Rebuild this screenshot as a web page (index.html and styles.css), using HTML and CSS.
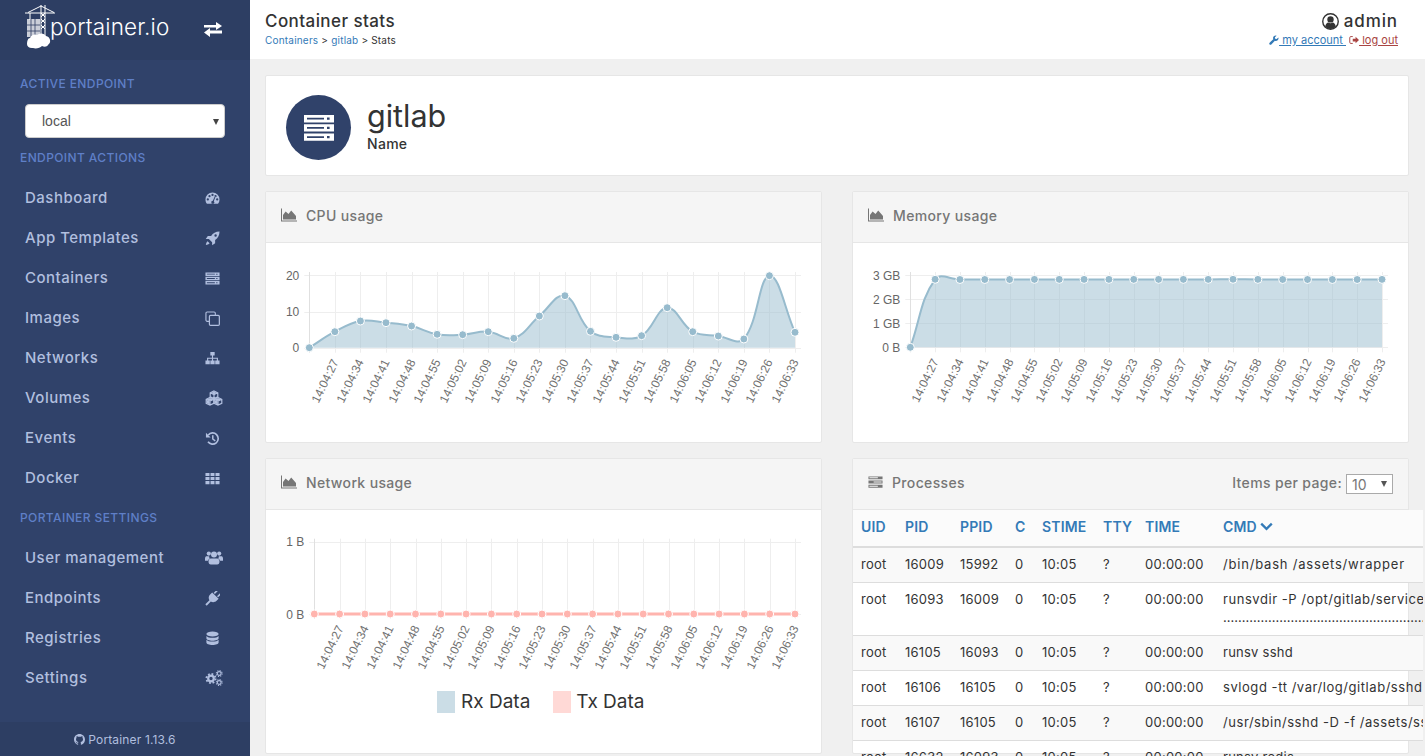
FILE: index.html
```html
<!DOCTYPE html>
<html lang="en">
<head>
    <meta charset="UTF-8">
    <title>Portainer - Container stats</title>
    <link rel="stylesheet" href="styles.css">
</head>
<body>
    <svg class="icon-defs" aria-hidden="true">
        <symbol id="i-exchange" viewBox="0 0 18 16"><path d="M0 4h12V1l6 4-6 4V6.500H0zM18 9.500H6V7L0 11.500 6 16v-3.500h12z" fill-rule="evenodd"/></symbol>
        <symbol id="i-dashboard" viewBox="0 0 16 16"><path fill-rule="evenodd" d="M8 1.500A7.500 7.500 0 0 0 .5 9c0 1.800.6 3.400 1.600 4.700h11.800A7.500 7.500 0 0 0 15.500 9 7.500 7.500 0 0 0 8 1.500zM3 7.800a1.200 1.200 0 1 1 0 2.400 1.200 1.200 0 0 1 0-2.400zM4.800 4.300a1.200 1.200 0 1 1 0 2.400 1.200 1.200 0 0 1 0-2.400zM8 3a1.200 1.200 0 1 1 0 2.400A1.200 1.200 0 0 1 8 3zm3.200 1.300a1.200 1.200 0 1 1 0 2.400 1.200 1.200 0 0 1 0-2.400zM13 7.800a1.200 1.200 0 1 1 0 2.400 1.200 1.200 0 0 1 0-2.400zM10.300 5.800l.9.400-1.800 4.600a1.600 1.600 0 1 1-1-.4z"/></symbol>
        <symbol id="i-rocket" viewBox="0 0 16 16"><path fill-rule="evenodd" d="M15.500.5c-4.200.1-7 1.600-9 4.700H3L.8 8.500h3.300l3.500 3.500v3.300l3.200-2.200v-3.500c3-2 4.600-4.800 4.700-9.100zM11.300 3.400a1.300 1.300 0 1 1 0 2.600 1.300 1.300 0 0 1 0-2.600z"/><path d="M2.700 10.800c-1.100.9-1.700 2.700-1.800 4 1.300-.1 3.100-.7 4-1.800z"/></symbol>
        <symbol id="i-server" viewBox="0 0 16 16"><path fill-rule="evenodd" d="M.5 1.500h15v3.700H.5zM2 2.900v.9h8.500v-.9zM12 2.800v1.100h1.300V2.800zM.5 6.100h15v3.700H.5zM2 7.500v.9h8.500v-.9zM12 7.400v1.100h1.300V7.400zM.5 10.700h15v3.700H.5zM2 12.100v.9h8.500v-.9zM12 12v1.100h1.300V12z"/></symbol>
        <symbol id="i-clone" viewBox="0 0 16 16"><path d="M4.500 11H2.300C1.600 11 1 10.400 1 9.700V2.300C1 1.600 1.600 1 2.300 1h7.400c.7 0 1.300.6 1.300 1.300v2.200" fill="none" stroke="currentColor" stroke-width="1.200"/><rect x="4.700" y="4.700" width="10.600" height="10.600" rx="1.200" fill="none" stroke="currentColor" stroke-width="1.300"/></symbol>
        <symbol id="i-sitemap" viewBox="0 0 16 16"><path d="M5.700 1h4.600v3.800H8.600v2.300h5.200v3h1.700V14h-4.600v-3.900h1.700V8.200H8.600v1.900h1.700V14H5.700v-3.900h1.700V8.200H3.400v1.900h1.700V14H.5v-3.900h1.700v-3h5.200V4.800H5.700z"/></symbol>
        <symbol id="i-cubes" viewBox="0 0 18 16"><g fill="none" stroke="currentColor" stroke-width="1.200"><path d="M9 1l3.800 1.800v4L9 8.600 5.200 6.800v-4zM5.200 2.800L9 4.600l3.800-1.800M9 4.600v4"/><path d="M5 7.500l3.800 1.800v4L5 15.100l-3.800-1.800v-4zM1.200 9.300L5 11.100l3.800-1.800M5 11.100v4"/><path d="M13 7.500l3.800 1.800v4L13 15.100l-3.800-1.800v-4zM9.200 9.300l3.800 1.800 3.800-1.800M13 11.100v4"/></g><path d="M9 1.500l3 1.400-3 1.300-3-1.300zM5 8l3 1.400-3 1.300-3-1.300zM13 8l3 1.400-3 1.300-3-1.300zM1.700 9.900l3 1.500v3l-3-1.500zM9.700 9.900l3 1.500v3l-3-1.500z"/></symbol>
        <symbol id="i-history" viewBox="0 0 16 16"><path d="M3.500 4.200a6 6 0 1 1-.3 7.300" fill="none" stroke="currentColor" stroke-width="1.800"/><path d="M1 1.800v5h5z"/><path d="M7.500 4.500h1.600v3.700l2.300 1.700-.9 1.200-3-2.200z"/></symbol>
        <symbol id="i-th" viewBox="0 0 16 16"><path d="M.5 2h4.300v3.300H.5zM5.900 2h4.200v3.300H5.900zM11.200 2h4.300v3.300h-4.300zM.5 6.400h4.300v3.200H.5zM5.900 6.400h4.200v3.200H5.900zM11.200 6.400h4.300v3.200h-4.300zM.5 10.700h4.300V14H.5zM5.900 10.700h4.200V14H5.900zM11.200 10.700h4.300V14h-4.300z"/></symbol>
        <symbol id="i-users" viewBox="0 0 18 16"><circle cx="3.800" cy="3.600" r="2.100"/><circle cx="14.200" cy="3.600" r="2.100"/><circle cx="9" cy="4.500" r="3"/><path d="M1 6.200h3.200c-.2.600.1 1.500.7 2.200-1 .4-1.700 1.200-1.900 2.300H0V8.400c0-1 .3-1.700 1-2.200zM17 6.200h-3.200c.2.600-.1 1.500-.7 2.200 1 .4 1.700 1.200 1.900 2.300H18V8.400c0-1-.3-1.700-1-2.200zM5.800 8.500h6.400c1.500 0 2.300 1.300 2.300 3.300 0 1.500-.8 2.700-2.300 2.700H5.800c-1.500 0-2.300-1.200-2.300-2.700 0-2 .8-3.300 2.300-3.300z"/></symbol>
        <symbol id="i-plug" viewBox="0 0 16 16"><g transform="rotate(45 8 8) translate(8 8) scale(1.150) translate(-8 -8)"><path d="M5.100-.5h1.500v4H5.100zM9.400-.5h1.500v4H9.400zM3.800 4.200h8.400v2.700c0 2.200-1.500 3.900-3.300 4.200v5.400H7.100v-5.400c-1.800-.3-3.300-2-3.300-4.200z"/></g></symbol>
        <symbol id="i-database" viewBox="0 0 16 16"><ellipse cx="8" cy="3.200" rx="6.500" ry="2.700"/><path d="M1.500 5.200c1 1.400 3.600 2 6.500 2s5.500-.6 6.500-2v2.600c0 1.500-2.900 2.700-6.500 2.700s-6.500-1.200-6.500-2.700zM1.500 9.300c1 1.400 3.600 2 6.500 2s5.500-.6 6.500-2v3c0 1.500-2.900 2.700-6.500 2.700s-6.500-1.200-6.500-2.700z"/></symbol>
        <symbol id="i-cogs" viewBox="0 0 18 16"><g fill="none" stroke="currentColor"><circle cx="6" cy="8.500" r="2.800" stroke-width="2.200"/><circle cx="6" cy="8.500" r="4.600" stroke-width="1.800" stroke-dasharray="1.800 1.810"/><circle cx="14.200" cy="3.500" r="1.900" stroke-width="1.100"/><circle cx="14.200" cy="3.500" r="2.900" stroke-width="1.100" stroke-dasharray="1.140 1.140"/><circle cx="14.200" cy="12.500" r="1.900" stroke-width="1.100"/><circle cx="14.200" cy="12.500" r="2.900" stroke-width="1.100" stroke-dasharray="1.140 1.140"/></g></symbol>
        <symbol id="i-github" viewBox="0 0 16 16"><path d="M8 0C3.580 0 0 3.580 0 8c0 3.540 2.290 6.530 5.470 7.590.4.070.55-.170.55-.380 0-.190-.010-.820-.010-1.490-2.010.370-2.530-.490-2.690-.940-.090-.230-.480-.940-.820-1.130-.280-.150-.680-.520-.010-.530.630-.010 1.080.580 1.230.820.720 1.210 1.870.870 2.330.660.070-.520.280-.870.510-1.070-1.780-.200-3.640-.890-3.640-3.950 0-.870.310-1.590.820-2.150-.080-.200-.360-1.020.080-2.120 0 0 .670-.210 2.200.820.640-.180 1.320-.270 2-.270.680 0 1.360.090 2 .27 1.530-1.040 2.200-.820 2.200-.820.440 1.100.160 1.920.080 2.120.510.560.820 1.270.820 2.150 0 3.070-1.870 3.750-3.650 3.950.290.250.540.730.540 1.480 0 1.070-.010 1.930-.010 2.200 0 .210.150.460.550.380A8.013 8.013 0 0 0 16 8c0-4.420-3.580-8-8-8z"/></symbol>
        <symbol id="i-wrench" viewBox="0 0 16 16"><path d="M15 3.800l-2.800 2.700-2.300-.5-.5-2.300L12.200 1A4.300 4.300 0 0 0 6.800 6.600L1 12.300a1.900 1.900 0 0 0 2.700 2.700l5.700-5.800A4.300 4.300 0 0 0 15 3.800z"/></symbol>
        <symbol id="i-signout" viewBox="0 0 16 16"><path d="M6 2.500H3A1.800 1.800 0 0 0 1.200 4.300v7.400A1.800 1.800 0 0 0 3 13.500h3" fill="none" stroke="currentColor" stroke-width="1.500"/><path d="M6 5.800h4.500V2.800L16 8l-5.500 5.200v-3H6z"/></symbol>
        <symbol id="i-user" viewBox="0 0 16 16"><circle cx="8" cy="8" r="7.300" fill="none" stroke="currentColor" stroke-width="1.300"/><circle cx="8" cy="6" r="3"/><path d="M3 13c.2-2.500 1.700-4 3-4 .6.400 1.200.6 2 .6s1.400-.2 2-.6c1.300 0 2.800 1.500 3 4-1.300 1.200-3 2-5 2s-3.700-.8-5-2z"/></symbol>
        <symbol id="i-area" viewBox="0 0 16 16"><path d="M0 1.500h1v12h15v1H0z"/><path d="M2 12.500V8l2.600-3.500L7.500 7l2.700-3.500L15 9v3.500z"/></symbol>
        <symbol id="i-tasks" viewBox="0 0 16 16"><path fill-rule="evenodd" d="M.5 2h15v3H.5zM1.500 3v1h9V3zM.5 6.500h15v3H.5zM6 7.500v1h8.500v-1zM.5 11h15v3H.5zM1.500 12v1h9v-1z"/></symbol>
        <symbol id="i-chevron" viewBox="0 0 16 16"><path d="M.5 5.500l2-2L8 9l5.500-5.500 2 2L8 13z"/></symbol>
    </svg>

    <div class="app">
        <aside class="sidebar">
            <div class="brand">
                <div class="logo">
                    <svg class="logo-mark" viewBox="0 0 30 44">
                        <g fill="none" stroke="#fff">
                            <path d="M0 8h30M16 1L3 7.500M16 1l13 6.500M16 0v37M20 0v33M16 8l4 4M20 8l-4 4M16 14l4 4M20 14l-4 4M16 20l4 4M20 20l-4 4" stroke-width="1"/>
                            <path d="M5 8v7" stroke-width="1"/>
                        </g>
                        <path d="M2 14h13v18H2z" fill="#fff" opacity=".75"/>
                        <path d="M6 14v18M10 14v18M2 20h13M2 26h13" stroke="#2d3e63" stroke-width=".8"/>
                        <path d="M5 33a5 5 0 0 1 7-3 6 6 0 0 1 9 1 5 5 0 0 1 2 9c-1 2-4 2-6 1-2 2-6 3-9 2-3 .5-6-1-6-4s1-6 3-6z" fill="#fff"/>
                    </svg>
                    <span class="logo-text">portainer.io</span>
                </div>
                <svg class="swap"><use href="#i-exchange"/></svg>
            </div>

            <div class="side-title side-title-first">Active endpoint</div>
            <div class="endpoint-select">
                <select><option>local</option></select>
            </div>

            <div class="side-title">Endpoint actions</div>
            <nav>
                <a class="side-item">Dashboard <svg><use href="#i-dashboard"/></svg></a>
                <a class="side-item">App Templates <svg><use href="#i-rocket"/></svg></a>
                <a class="side-item">Containers <svg><use href="#i-server"/></svg></a>
                <a class="side-item">Images <svg><use href="#i-clone"/></svg></a>
                <a class="side-item">Networks <svg><use href="#i-sitemap"/></svg></a>
                <a class="side-item">Volumes <svg class="wide"><use href="#i-cubes"/></svg></a>
                <a class="side-item">Events <svg><use href="#i-history"/></svg></a>
                <a class="side-item">Docker <svg><use href="#i-th"/></svg></a>
            </nav>

            <div class="side-title">Portainer settings</div>
            <nav>
                <a class="side-item">User management <svg class="wide"><use href="#i-users"/></svg></a>
                <a class="side-item">Endpoints <svg><use href="#i-plug"/></svg></a>
                <a class="side-item">Registries <svg><use href="#i-database"/></svg></a>
                <a class="side-item">Settings <svg class="wide"><use href="#i-cogs"/></svg></a>
            </nav>

            <div class="side-footer"><svg><use href="#i-github"/></svg> Portainer 1.13.6</div>
        </aside>

        <div class="main">
            <header class="topbar">
                <div>
                    <div class="page-title">Container stats</div>
                    <div class="crumbs"><a>Containers</a> &gt; <a>gitlab</a> &gt; Stats</div>
                </div>
                <div class="account">
                    <div class="account-name"><svg><use href="#i-user"/></svg> admin</div>
                    <div class="account-links">
                        <svg class="blue"><use href="#i-wrench"/></svg><a class="blue">&nbsp;my account&nbsp;</a>
                        <svg class="red"><use href="#i-signout"/></svg><a class="red">&nbsp;log out</a>
                    </div>
                </div>
            </header>

            <div class="content">
                <section class="card name-card">
                    <div class="name-icon"><svg><use href="#i-server"/></svg></div>
                    <div>
                        <div class="name-value">gitlab</div>
                        <div class="name-label">Name</div>
                    </div>
                </section>

                <div class="stats-grid">
                    <section class="card card-short">
                        <div class="card-head"><svg><use href="#i-area"/></svg> <span>CPU usage</span></div>
                        <div class="chart" id="cpu-chart"></div>
                    </section>
                    <section class="card card-short">
                        <div class="card-head"><svg><use href="#i-area"/></svg> <span>Memory usage</span></div>
                        <div class="chart" id="memory-chart"></div>
                    </section>
                    <section class="card card-tall">
                        <div class="card-head"><svg><use href="#i-area"/></svg> <span>Network usage</span></div>
                        <div class="chart" id="network-chart"></div>
                        <div class="legend">
                            <span class="swatch swatch-rx"></span><span class="legend-label">Rx Data</span>
                            <span class="swatch swatch-tx"></span><span class="legend-label">Tx Data</span>
                        </div>
                    </section>
                    <section class="card card-tall">
                        <div class="card-head">
                            <svg class="tasks"><use href="#i-tasks"/></svg> <span>Processes</span>
                            <div class="per-page"><span>Items per page:</span>
                                <div class="per-page-select"><select><option>10</option></select></div>
                            </div>
                        </div>
                        <div class="table-clip">
                            <table class="proc-table">
                                <colgroup>
                                    <col class="c-uid"><col class="c-pid"><col class="c-ppid"><col class="c-c">
                                    <col class="c-stime"><col class="c-tty"><col class="c-time"><col>
                                </colgroup>
                                <thead>
                                    <tr><th>UID</th><th>PID</th><th>PPID</th><th>C</th><th>STIME</th><th>TTY</th><th>TIME</th><th>CMD <svg><use href="#i-chevron"/></svg></th></tr>
                                </thead>
                                <tbody>
                                    <tr><td>root</td><td>16009</td><td>15992</td><td>0</td><td>10:05</td><td>?</td><td>00:00:00</td><td class="cmd-wide">/bin/bash /assets/wrapper</td></tr>
                                    <tr><td>root</td><td>16093</td><td>16009</td><td>0</td><td>10:05</td><td>?</td><td>00:00:00</td><td class="cmd-path">runsvdir -P /opt/gitlab/service log:<br><span class="dots">..........................................................................................</span></td></tr>
                                    <tr><td>root</td><td>16105</td><td>16093</td><td>0</td><td>10:05</td><td>?</td><td>00:00:00</td><td>runsv sshd</td></tr>
                                    <tr><td>root</td><td>16106</td><td>16105</td><td>0</td><td>10:05</td><td>?</td><td>00:00:00</td><td class="cmd-path">svlogd -tt /var/log/gitlab/sshd</td></tr>
                                    <tr><td>root</td><td>16107</td><td>16105</td><td>0</td><td>10:05</td><td>?</td><td>00:00:00</td><td class="cmd-path">/usr/sbin/sshd -D -f /assets/sshd_config</td></tr>
                                    <tr><td>root</td><td>16632</td><td>16093</td><td>0</td><td>10:05</td><td>?</td><td>00:00:00</td><td>runsv redis</td></tr>
                                </tbody>
                            </table>
                        </div>
                    </section>
                </div>
            </div>
        </div>
    </div>

    <script src="charts.js"></script>
</body>
</html>
```

FILE: styles.css
```css
* {
    box-sizing: border-box;
}
html, body {
    margin: 0;
    height: 100%;
    overflow: hidden;
}
body {
    font-family: Inter, "Noto Sans", sans-serif;
    font-size: 13px;
    color: #333;
    background: #f0f0f0;
}
svg {
    fill: currentColor;
}
.icon-defs {
    display: none;
}
.app {
    display: flex;
    height: 756px;
}

/* sidebar */
.sidebar {
    width: 250px;
    flex: none;
    display: flex;
    flex-direction: column;
    background: #30426a;
    color: #b1bfdf;
}
.brand {
    height: 60px;
    flex: none;
    display: flex;
    align-items: flex-start;
    padding: 5px 28px 0 25px;
    justify-content: space-between;
    background: #2d3e63;
    color: #fff;
}
.logo {
    display: flex;
    align-items: center;
}
.logo-mark {
    width: 30px;
    height: 44px;
    flex: none;
}
.logo-text {
    font-size: 22.5px;
    font-weight: 300;
    letter-spacing: 0.15px;
    margin: 0 0 2px -5px;
}
.swap {
    width: 18px;
    height: 16px;
    margin-top: 16px;
}
.side-title {
    height: 40px;
    flex: none;
    display: flex;
    align-items: center;
    padding: 0 0 2px 20px;
    font-size: 12px;
    font-weight: 500;
    letter-spacing: 0.4px;
    text-transform: uppercase;
    color: #5f7fc7;
}
.side-title-first {
    margin-top: 4px;
}
.endpoint-select {
    position: relative;
    margin: 0 25px;
}
.endpoint-select::after, .per-page-select::after {
    content: "";
    position: absolute;
    border: 3.5px solid transparent;
    border-top: 6px solid #444;
    border-bottom: 0;
}
.endpoint-select::after {
    right: 6px;
    top: 15px;
}
.endpoint-select select {
    display: block;
    width: 200px;
    height: 34px;
    padding-left: 16px;
    border: 1px solid #ccc;
    border-radius: 4px;
    background: #fff;
    color: #555;
    font: 14px "Liberation Sans", sans-serif;
    appearance: none;
}
.side-item {
    height: 40px;
    display: flex;
    align-items: center;
    justify-content: space-between;
    padding: 0 30px 2px 25px;
    font-size: 15px;
    font-weight: 500;
    letter-spacing: 0.5px;
}
.side-item svg {
    width: 15px;
    height: 15px;
    margin-top: 2px;
}
.side-item svg.wide {
    width: 18px;
    height: 16px;
    margin-right: -3px;
}
.side-footer {
    margin-top: auto;
    height: 34px;
    display: flex;
    align-items: center;
    justify-content: center;
    gap: 3px;
    background: #2d3e63;
    font-size: 12px;
    letter-spacing: 0.15px;
}
.side-footer svg {
    width: 11px;
    height: 11px;
}

/* top bar */
.main {
    flex: 1;
    min-width: 0;
    display: flex;
    flex-direction: column;
}
.topbar {
    height: 59px;
    flex: none;
    display: flex;
    justify-content: space-between;
    padding: 12px 27px 0 15px;
    background: #fff;
}
.page-title {
    font-size: 17px;
    font-weight: 500;
    letter-spacing: 0.43px;
    line-height: 19px;
}
.crumbs {
    font-size: 10px;
    line-height: 14px;
    margin-top: 2px;
    letter-spacing: 0.2px;
}
.crumbs a {
    color: #337ab7;
}
.account {
    text-align: right;
}
.account-name {
    display: flex;
    justify-content: flex-end;
    align-items: center;
    gap: 5px;
    font-size: 17px;
    font-weight: 500;
    letter-spacing: 0.9px;
    line-height: 19px;
}
.account-name svg {
    width: 17px;
    height: 17px;
}
.account-links {
    font-size: 11px;
    line-height: 14px;
    margin-top: 2px;
    white-space: nowrap;
}
.account-links svg {
    width: 10px;
    height: 10px;
    vertical-align: -1px;
}
.account-links a {
    text-decoration: underline;
}
.blue {
    color: #337ab7;
}
.red {
    color: #a94442;
}

/* cards */
.content {
    padding: 16px 16px 0 15px;
}
.card {
    background: #fff;
    border: 1px solid #e6e6e6;
    border-radius: 2px;
}
.name-card {
    height: 101px;
    display: flex;
    align-items: center;
    gap: 16px;
    padding-left: 20px;
}
.name-icon {
    width: 65px;
    height: 65px;
    flex: none;
    margin-top: 4px;
    display: flex;
    align-items: center;
    justify-content: center;
    border-radius: 50%;
    background: #30426a;
    color: #fff;
}
.name-icon svg {
    width: 32px;
    height: 32px;
}
.name-value {
    font-size: 30.5px;
    line-height: 36px;
    font-weight: 400;
}
.name-label {
    font-size: 14px;
    font-weight: 500;
    line-height: 20px;
    letter-spacing: 0.3px;
}
.stats-grid {
    display: grid;
    grid-template-columns: 557px 557px;
    column-gap: 30px;
    row-gap: 15px;
    margin-top: 15px;
}
.card-short {
    height: 252px;
}
.card-tall {
    height: 296px;
}
.card-head {
    height: 51px;
    display: flex;
    align-items: center;
    gap: 9px;
    padding: 0 15px 4px;
    background: #f5f5f5;
    border-bottom: 1px solid #e6e6e6;
    color: #767676;
    font-size: 14px;
    font-weight: 500;
    letter-spacing: 0.35px;
}
.card-head > svg {
    width: 16px;
    height: 16px;
}
.card-head > svg.tasks {
    width: 15px;
}
.chart svg {
    display: block;
}

/* legend below the network chart */
.legend {
    display: flex;
    align-items: center;
    padding-left: 171px;
    font-size: 19px;
}
.swatch {
    width: 18px;
    height: 22px;
    margin-right: 6px;
}
.swatch-rx {
    background: #cbdde6;
}
.swatch-tx {
    background: #ffd9d6;
    margin-right: 5px;
}
.legend-label {
    margin-right: 23px;
}

/* processes */
.per-page {
    margin-left: auto;
    display: flex;
    align-items: center;
    gap: 4px;
}
.per-page-select {
    position: relative;
    margin-top: 4px;
}
.per-page-select::after {
    right: 6px;
    top: 7px;
    border-top-color: #555;
}
.per-page-select select {
    display: block;
    width: 47px;
    height: 20px;
    padding-left: 5px;
    border: 1px solid #aaa;
    border-radius: 0;
    background: #fff;
    color: #777;
    font: 14px Inter, sans-serif;
    appearance: none;
}
.table-clip {
    width: 570px;
    overflow: hidden;
}
.proc-table {
    width: 570px;
    table-layout: fixed;
    border-collapse: collapse;
    white-space: nowrap;
    letter-spacing: 0.25px;
}
.c-uid { width: 44px; }
.c-pid { width: 55px; }
.c-ppid { width: 55px; }
.c-c { width: 27px; }
.c-stime { width: 61px; }
.c-tty { width: 42px; }
.c-time { width: 78px; }
.proc-table th, .proc-table td {
    padding: 7px 8px 9px;
    text-align: left;
    vertical-align: top;
    line-height: 18px;
    overflow: hidden;
}
.proc-table th {
    color: #337ab7;
    font-size: 14px;
    font-weight: 600;
    letter-spacing: 0.15px;
    height: 37px;
    vertical-align: middle;
    background: #fbfbfb;
    border-bottom: 2px solid #ddd;
}
.proc-table th svg {
    width: 13px;
    height: 13px;
    vertical-align: -1px;
}
.proc-table td {
    border-bottom: 1px solid #ddd;
}
.proc-table td.cmd-path {
    letter-spacing: 0.55px;
}
.proc-table td.cmd-wide {
    letter-spacing: 0.8px;
}
.dots {
    letter-spacing: 0;
}
.proc-table tbody tr:nth-child(odd) {
    background: #f9f9f9;
}
```

FILE: charts.js
```js
const SVG_NS = 'http://www.w3.org/2000/svg';
const times = ['14:04:27', '14:04:34', '14:04:41', '14:04:48', '14:04:55', '14:05:02', '14:05:09', '14:05:16',
    '14:05:23', '14:05:30', '14:05:37', '14:05:44', '14:05:51', '14:05:58', '14:06:05', '14:06:12',
    '14:06:19', '14:06:26', '14:06:33'];

function el(parent, name, attrs, text) {
    const node = document.createElementNS(SVG_NS, name);
    for (const key in attrs) node.setAttribute(key, attrs[key]);
    if (text) node.textContent = text;
    parent.appendChild(node);
    return node;
}

// same spline as chart.js uses, tension 0.4
function splinePath(pts) {
    const t = 0.4;
    const cps = pts.map((p, i) => {
        const a = pts[i - 1] || p;
        const b = pts[i + 1] || p;
        const d1 = Math.hypot(p[0] - a[0], p[1] - a[1]);
        const d2 = Math.hypot(b[0] - p[0], b[1] - p[1]);
        const s = d1 + d2 || 1;
        return {
            prev: [p[0] - t * d1 / s * (b[0] - a[0]), p[1] - t * d1 / s * (b[1] - a[1])],
            next: [p[0] + t * d2 / s * (b[0] - a[0]), p[1] + t * d2 / s * (b[1] - a[1])]
        };
    });
    let d = 'M' + pts[0].join(' ');
    for (let i = 1; i < pts.length; i++) {
        d += 'C' + cps[i - 1].next.join(' ') + ' ' + cps[i].prev.join(' ') + ' ' + pts[i].join(' ');
    }
    return d;
}

function drawChart(id, opts) {
    const svg = el(document.getElementById(id), 'svg', { width: 555, height: opts.height });
    const step = (opts.right - opts.left) / 19;
    const bottom = opts.ticks[opts.ticks.length - 1].y;
    const top = opts.ticks[0].y;

    opts.ticks.forEach(tick => {
        el(svg, 'path', { d: `M${opts.left - 5} ${Math.round(tick.y) + 0.5}H${opts.right + 6}`, stroke: '#eee', fill: 'none' });
        el(svg, 'text', { x: opts.left - 10, y: tick.y + 4.5, 'text-anchor': 'end', fill: '#666', 'font-family': 'Liberation Sans', 'font-size': 12 }, tick.label);
    });
    for (let i = 0; i < 20; i++) {
        const x = Math.round(opts.left + i * step) + 0.5;
        el(svg, 'path', { d: `M${x} ${top - 3}V${bottom + 5}`, stroke: i ? '#eee' : '#e0e0e0', fill: 'none' });
        if (i) {
            el(svg, 'text', {
                x: 0, y: 0, 'text-anchor': 'end', fill: '#707070', 'font-family': 'Liberation Sans', 'font-size': 12,
                transform: `translate(${x + 3.5} ${bottom + 14}) rotate(-64)`
            }, times[i - 1]);
        }
    }

    const pts = opts.values.map((y, i) => [opts.left + i * step, y]);
    const line = splinePath(pts);
    el(svg, 'path', { d: `${line}V${bottom}H${opts.left}Z`, fill: opts.fill });
    el(svg, 'path', { d: line, fill: 'none', stroke: opts.color, 'stroke-width': opts.lineWidth || 2 });
    pts.forEach(p => {
        el(svg, 'circle', { cx: p[0], cy: p[1], r: 4, fill: opts.color, stroke: '#fff', 'stroke-width': 1 });
    });
}

const blue = '#97bbcd';

drawChart('cpu-chart', {
    height: 200, left: 43.3, right: 529,
    ticks: [{ label: '20', y: 32 }, { label: '10', y: 68.500 }, { label: '0', y: 104.700 }],
    values: [104.7, 88.7, 78, 79.7, 83, 91.3, 91.7, 88.7, 95.3, 73, 52.7, 88.3, 94.3, 92.7, 64.7, 88.7, 93, 96, 32.7, 89.3],
    color: blue, fill: 'rgba(151,187,205,0.5)'
});

drawChart('memory-chart', {
    height: 200, left: 57.3, right: 529,
    ticks: [{ label: '3 GB', y: 32 }, { label: '2 GB', y: 56 }, { label: '1 GB', y: 80 }, { label: '0 B', y: 104.300 }],
    values: [104.3, 36.3, 36.5, 36.5, 36.5, 36.4, 36.4, 36.4, 36.4, 36.4, 36.4, 36.4, 36.4, 36.3, 36.4, 36.5, 36.5, 36.5, 36.5, 36.4],
    color: blue, fill: 'rgba(151,187,205,0.5)'
});

drawChart('network-chart', {
    height: 180, left: 48.3, right: 529,
    ticks: [{ label: '1 B', y: 31.700 }, { label: '0 B', y: 104 }],
    values: Array(20).fill(104),
    color: '#ffb4ae', fill: 'rgba(255,180,174,0.5)', lineWidth: 3
});
```
